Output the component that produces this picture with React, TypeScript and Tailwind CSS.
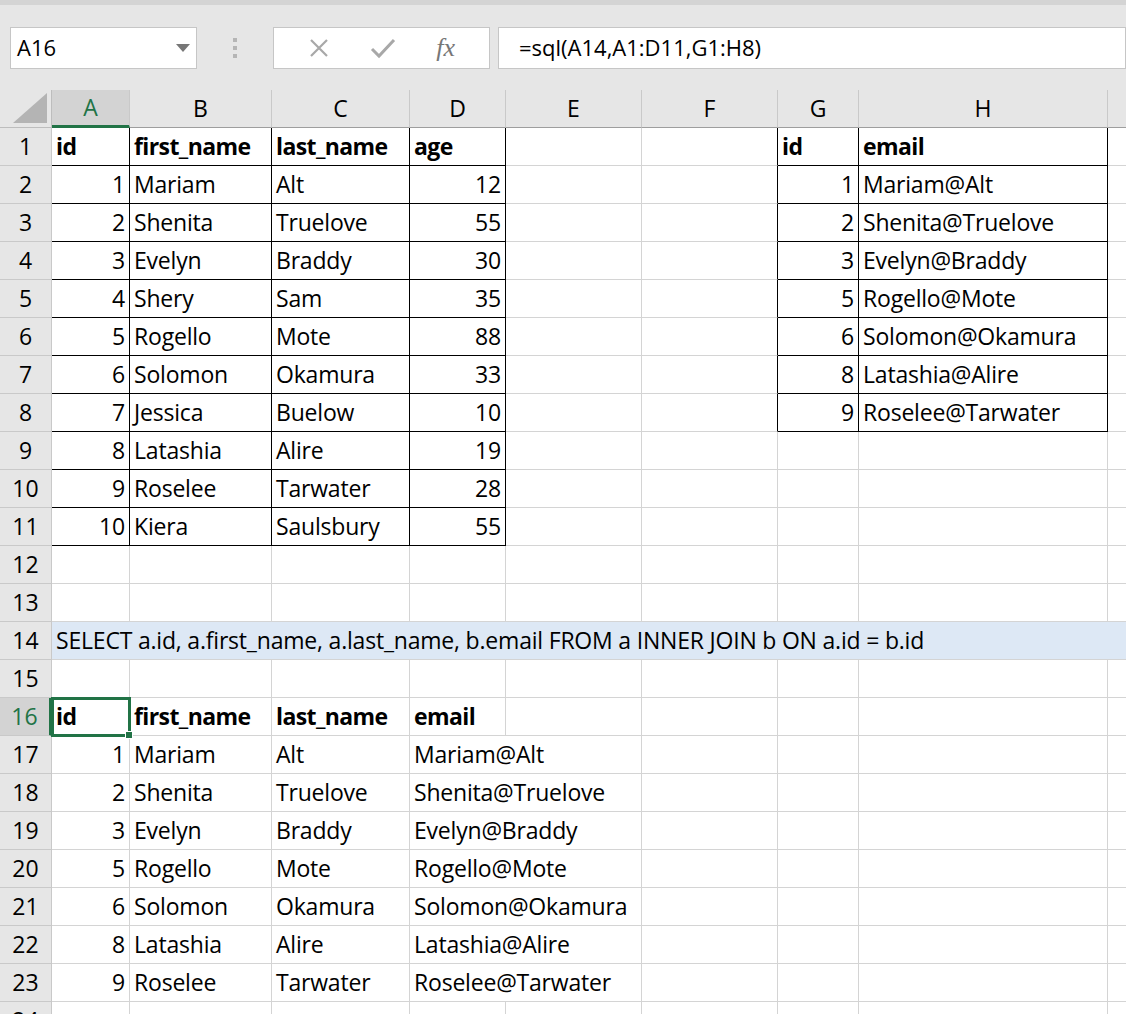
import React from 'react'

const cols = ['A', 'B', 'C', 'D', 'E', 'F', 'G', 'H', 'I']
const widths = [78, 142, 138, 96, 136, 136, 81, 249, 60]

type Cell = { t: string; b?: boolean; r?: boolean }

const people = [
  [1, 'Mariam', 'Alt', 12], [2, 'Shenita', 'Truelove', 55], [3, 'Evelyn', 'Braddy', 30],
  [4, 'Shery', 'Sam', 35], [5, 'Rogello', 'Mote', 88], [6, 'Solomon', 'Okamura', 33],
  [7, 'Jessica', 'Buelow', 10], [8, 'Latashia', 'Alire', 19], [9, 'Roselee', 'Tarwater', 28],
  [10, 'Kiera', 'Saulsbury', 55],
] as const
const emails = [
  [1, 'Mariam@Alt'], [2, 'Shenita@Truelove'], [3, 'Evelyn@Braddy'], [5, 'Rogello@Mote'],
  [6, 'Solomon@Okamura'], [8, 'Latashia@Alire'], [9, 'Roselee@Tarwater'],
] as const
const joined = [
  [1, 'Mariam', 'Alt'], [2, 'Shenita', 'Truelove'], [3, 'Evelyn', 'Braddy'], [5, 'Rogello', 'Mote'],
  [6, 'Solomon', 'Okamura'], [8, 'Latashia', 'Alire'], [9, 'Roselee', 'Tarwater'],
] as const

function buildSheet() {
  const g: Record<string, Cell> = {}
  const put = (r: number, c: number, cell: Cell) => (g[`${r}-${c}`] = cell)
  ;['id', 'first_name', 'last_name', 'age'].forEach((t, i) => put(1, i, { t, b: true }))
  people.forEach((p, i) => {
    put(i + 2, 0, { t: String(p[0]), r: true })
    put(i + 2, 1, { t: p[1] })
    put(i + 2, 2, { t: p[2] })
    put(i + 2, 3, { t: String(p[3]), r: true })
  })
  put(1, 6, { t: 'id', b: true })
  put(1, 7, { t: 'email', b: true })
  emails.forEach((e, i) => {
    put(i + 2, 6, { t: String(e[0]), r: true })
    put(i + 2, 7, { t: e[1] })
  })
  put(14, 0, { t: 'SELECT a.id, a.first_name, a.last_name, b.email FROM a INNER JOIN b ON a.id = b.id' })
  ;['id', 'first_name', 'last_name', 'email'].forEach((t, i) => put(16, i, { t, b: true }))
  joined.forEach((j, i) => {
    put(i + 17, 0, { t: String(j[0]), r: true })
    put(i + 17, 1, { t: j[1] })
    put(i + 17, 2, { t: j[2] })
    put(i + 17, 3, { t: emails[i][1] })
  })
  return g
}

const inTable = (r: number, c: number) =>
  (r >= 1 && r <= 11 && c >= 0 && c <= 3) || (r >= 1 && r <= 8 && c >= 6 && c <= 7)

export default function App() {
  const sheet = buildSheet()
  const rows = Array.from({ length: 24 }, (_, i) => i + 1)
  const font = { fontFamily: '"Open Sans", "Liberation Sans", sans-serif' }

  return (
    <div className="w-[1126px] h-[1014px] overflow-hidden bg-white text-black" style={font}>
      {/* ::Toolbar */}
      <div className="h-[90px] bg-[#e6e6e6] border-t-[5px] border-[#d4d4d4] flex items-center pl-[10px]">
        <div className="w-[187px] h-[42px] bg-white border border-[#c6c6c6] flex items-center justify-between px-[6px] text-[22px]">
          <span>A16</span>
          <svg width="14" height="8" viewBox="0 0 14 8"><path d="M0 0h14L7 8z" fill="#777" /></svg>
        </div>
        <div className="w-[76px] flex justify-center">
          <svg width="6" height="22" viewBox="0 0 6 22">
            <rect x="1" y="1" width="4" height="4" fill="#b5b5b5" />
            <rect x="1" y="9" width="4" height="4" fill="#b5b5b5" />
            <rect x="1" y="17" width="4" height="4" fill="#b5b5b5" />
          </svg>
        </div>
        <div className="w-[217px] h-[42px] bg-white border border-[#c6c6c6] flex items-center justify-around px-[14px]">
          <svg width="22" height="22" viewBox="0 0 22 22"><path d="M3 3l16 16M19 3L3 19" stroke="#a8a8a8" strokeWidth="2.2" /></svg>
          <svg width="26" height="22" viewBox="0 0 26 22"><path d="M2 12l7 7L24 3" stroke="#a8a8a8" strokeWidth="3" fill="none" /></svg>
          <span className="italic text-[26px] text-[#777]" style={{ fontFamily: '"Liberation Serif", serif' }}>fx</span>
        </div>
        <div className="ml-[8px] flex-1 h-[42px] bg-white border border-[#c6c6c6] flex items-center pl-[20px] text-[22px]">
          =sql(A14,A1:D11,G1:H8)
        </div>
      </div>

      {/* ::Column headers */}
      <div className="flex h-[38px] bg-[#e6e6e6]">
        <div className="w-[52px] shrink-0 border-r border-b border-[#bdbdbd] flex items-end justify-end p-[4px]">
          <svg width="34" height="30" viewBox="0 0 34 30"><path d="M34 0v30H0z" fill="#b4b4b4" /></svg>
        </div>
        {cols.map((c, i) => (
          <div
            key={c}
            style={{ width: widths[i] }}
            className={`shrink-0 flex items-center justify-center text-[23px] border-r border-[#c9c9c9] ${
              i === 0 ? 'bg-[#d3d3d3] text-[#217346] border-b-[3px] border-b-[#217346]' : 'border-b border-b-[#9e9e9e]'
            }`}
          >
            {c}
          </div>
        ))}
      </div>

      {/* ::Rows */}
      {rows.map((r) => (
        <div key={r} className="flex h-[38px]">
          <div
            className={`w-[52px] shrink-0 border-r border-b border-[#c9c9c9] flex items-center justify-center text-[23px] ${
              r === 16 ? 'bg-[#d3d3d3] text-[#217346] border-r-[3px] border-r-[#217346]' : 'bg-[#e6e6e6]'
            }`}
          >
            {r}
          </div>
          {cols.map((_, c) => {
            const cell = sheet[`${r}-${c}`]
            const blackR = inTable(r, c) || inTable(r, c + 1)
            const blackB = inTable(r, c) || inTable(r + 1, c)
            const hideR = r === 14 || (r >= 17 && r <= 23 && c === 3)
            return (
              <div
                key={c}
                style={{ width: widths[c] }}
                className={`relative shrink-0 border-b ${hideR ? '' : 'border-r'} ${blackR ? 'border-r-black' : 'border-r-[#d4d4d4]'} ${
                  blackB ? 'border-b-black' : 'border-b-[#d4d4d4]'
                } ${r === 14 ? 'bg-[#dde8f5]' : ''}`}
              >
                {cell && (
                  <span
                    className={`absolute top-0 h-full flex items-center whitespace-nowrap text-[23px] tracking-[-0.2px] z-10 ${
                      cell.r ? 'right-[4px]' : 'left-[4px]'
                    } ${cell.b ? 'font-bold tracking-[-0.6px]' : ''}`}
                  >
                    {cell.t}
                  </span>
                )}
                {r === 16 && c === 0 && (
                  <div className="absolute -left-px -top-px w-[80px] h-[40px] border-[3px] border-[#217346] z-20">
                    <div className="absolute -right-[5px] -bottom-[5px] w-[8px] h-[8px] bg-[#217346] border border-white" />
                  </div>
                )}
              </div>
            )
          })}
        </div>
      ))}
    </div>
  )
}
